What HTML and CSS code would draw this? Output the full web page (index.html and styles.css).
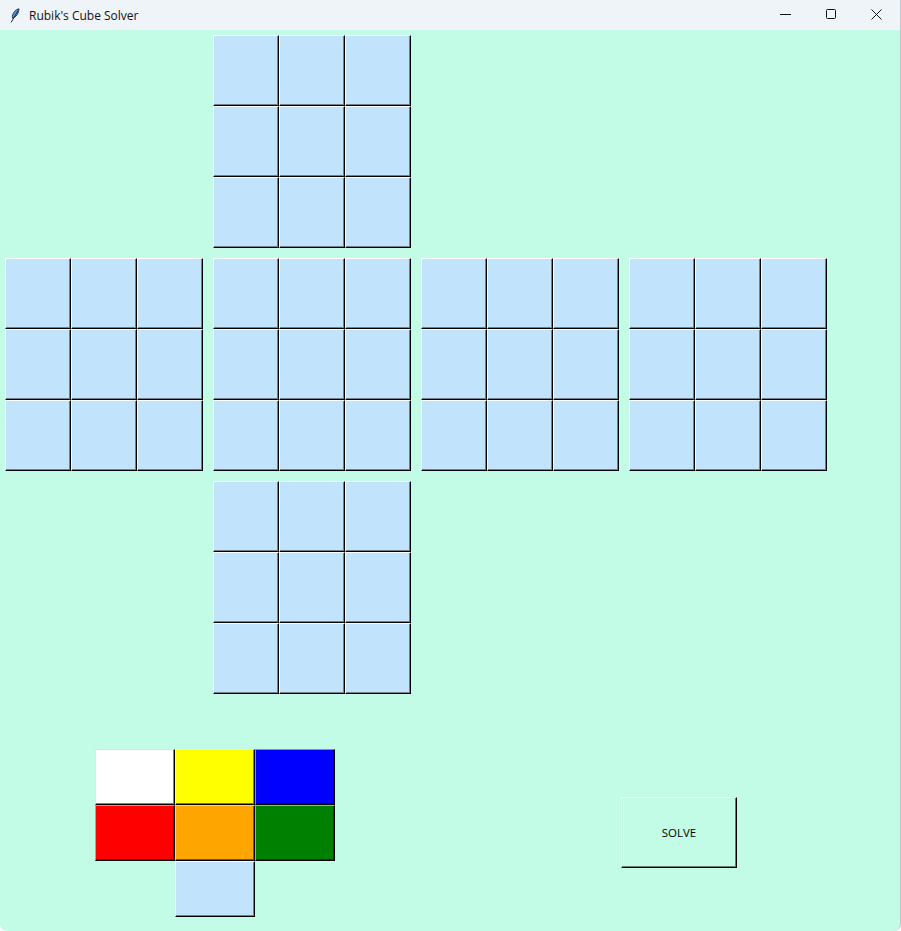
FILE: index.html
```html
<!DOCTYPE html>
<html>
<head>
<meta charset="utf-8">
<title>Rubik's Cube Solver</title>
<link rel="stylesheet" href="styles.css">
</head>
<body>
<div class="window">
  <div class="titlebar">
    <svg class="feather" width="10" height="15" viewBox="0 0 10 15">
      <path d="M9 0.8 C5.5 1.5 3 4.5 2.3 8.5 L2.6 10.2 C6.5 9 8.8 5 9 0.8 Z" fill="#5b9be0" stroke="#172840" stroke-width="0.9" stroke-linejoin="round"/>
      <path d="M7.8 2.8 L1.2 14.3" stroke="#172840" stroke-width="1"/>
    </svg>
    <span class="title">Rubik's Cube Solver</span>
    <div class="controls">
      <svg class="ctl" width="46" height="30" viewBox="0 0 46 30"><path d="M18 14.5 H29" stroke="#111" stroke-width="1"/></svg>
      <svg class="ctl" width="46" height="30" viewBox="0 0 46 30"><rect x="18.5" y="9.5" width="9" height="9" rx="1" fill="none" stroke="#111" stroke-width="1"/></svg>
      <svg class="ctl" width="46" height="30" viewBox="0 0 46 30"><path d="M17.5 9.5 L27.5 19.5 M27.5 9.5 L17.5 19.5" stroke="#111" stroke-width="1"/></svg>
    </div>
  </div>
  <div class="content">
    <div class="net">
      <div class="face f-up"><div class="cell"></div><div class="cell"></div><div class="cell"></div><div class="cell"></div><div class="cell"></div><div class="cell"></div><div class="cell"></div><div class="cell"></div><div class="cell"></div></div>
      <div class="face f-left"><div class="cell"></div><div class="cell"></div><div class="cell"></div><div class="cell"></div><div class="cell"></div><div class="cell"></div><div class="cell"></div><div class="cell"></div><div class="cell"></div></div>
      <div class="face f-front"><div class="cell"></div><div class="cell"></div><div class="cell"></div><div class="cell"></div><div class="cell"></div><div class="cell"></div><div class="cell"></div><div class="cell"></div><div class="cell"></div></div>
      <div class="face f-right"><div class="cell"></div><div class="cell"></div><div class="cell"></div><div class="cell"></div><div class="cell"></div><div class="cell"></div><div class="cell"></div><div class="cell"></div><div class="cell"></div></div>
      <div class="face f-back"><div class="cell"></div><div class="cell"></div><div class="cell"></div><div class="cell"></div><div class="cell"></div><div class="cell"></div><div class="cell"></div><div class="cell"></div><div class="cell"></div></div>
      <div class="face f-down"><div class="cell"></div><div class="cell"></div><div class="cell"></div><div class="cell"></div><div class="cell"></div><div class="cell"></div><div class="cell"></div><div class="cell"></div><div class="cell"></div></div>
    </div>
    <div class="bottom">
      <div class="palette">
        <div class="swatch white"></div>
        <div class="swatch yellow"></div>
        <div class="swatch blue"></div>
        <div class="swatch red"></div>
        <div class="swatch orange"></div>
        <div class="swatch green"></div>
        <div class="swatch empty"></div>
        <div class="swatch lightblue"></div>
      </div>
      <div class="solve">SOLVE</div>
    </div>
  </div>
</div>
</body>
</html>
```
FILE: styles.css
```css
html, body {
  margin: 0;
  padding: 0;
  background: #ffffff;
}
.window {
  width: 900px;
  height: 931px;
  background: #c3fce6;
  border-right: 1px solid #bcc6cc;
  border-radius: 0 0 7px 7px;
  overflow: hidden;
  font-family: "Open Sans", "Noto Sans", sans-serif;
}
.titlebar {
  height: 30px;
  background: #eff4f9;
  display: flex;
  align-items: center;
}
.feather {
  margin-left: 10px;
  margin-top: 1px;
}
.title {
  margin-left: 9px;
  font-size: 12px;
  color: #111;
}
.controls {
  margin-left: auto;
  display: flex;
}
.ctl {
  display: block;
}
.content {
  padding: 5px 0 0 5px;
}
.net {
  display: grid;
  grid-template-columns: repeat(4, 198px);
  grid-template-rows: repeat(3, 213px);
  column-gap: 10px;
  row-gap: 10px;
}
.face {
  display: grid;
  grid-template-columns: repeat(3, 66px);
  grid-template-rows: repeat(3, 71px);
}
.f-up { grid-column: 2; grid-row: 1; }
.f-left { grid-column: 1; grid-row: 2; }
.f-front { grid-column: 2; grid-row: 2; }
.f-right { grid-column: 3; grid-row: 2; }
.f-back { grid-column: 4; grid-row: 2; }
.f-down { grid-column: 2; grid-row: 3; }
.cell, .swatch {
  box-sizing: border-box;
  background: #c1e4fc;
  border-top: 1px solid #ffffff;
  border-left: 1px solid #ffffff;
  border-right: 1px solid #000000;
  border-bottom: 1px solid #000000;
  box-shadow: inset -1px -1px 0 #6f8191;
}
.bottom {
  display: flex;
  align-items: flex-start;
  margin-top: 55px;
}
.palette {
  margin-left: 90px;
  display: grid;
  grid-template-columns: repeat(3, 80px);
  grid-template-rows: repeat(3, 56px);
}
.swatch.white { background: #ffffff; border-top-color: #e3e3e3; border-left-color: #e3e3e3; box-shadow: inset -1px -1px 0 #808080; }
.swatch.yellow { background: #ffff00; border-top-color: #ffff80; border-left-color: #ffff80; box-shadow: inset -1px -1px 0 #808000; }
.swatch.blue { background: #0000ff; border-top-color: #8080ff; border-left-color: #8080ff; box-shadow: inset -1px -1px 0 #000080; }
.swatch.red { background: #ff0000; border-top-color: #ff8080; border-left-color: #ff8080; box-shadow: inset -1px -1px 0 #800000; }
.swatch.orange { background: #ffa500; border-top-color: #ffd280; border-left-color: #ffd280; box-shadow: inset -1px -1px 0 #805200; }
.swatch.green { background: #008000; border-top-color: #80c080; border-left-color: #80c080; box-shadow: inset -1px -1px 0 #004000; }
.swatch.empty { background: transparent; border: none; box-shadow: none; }
.swatch.lightblue { grid-column: 2; }
.solve {
  box-sizing: border-box;
  margin-left: 286px;
  margin-top: 48px;
  width: 116px;
  height: 71px;
  background: #c3fce6;
  border-top: 1px solid #e1fef3;
  border-left: 1px solid #e1fef3;
  border-right: 1px solid #000000;
  border-bottom: 1px solid #000000;
  box-shadow: inset -1px -1px 0 #617e73;
  display: flex;
  align-items: center;
  justify-content: center;
  font-size: 11.5px;
  color: #000;
}
```
